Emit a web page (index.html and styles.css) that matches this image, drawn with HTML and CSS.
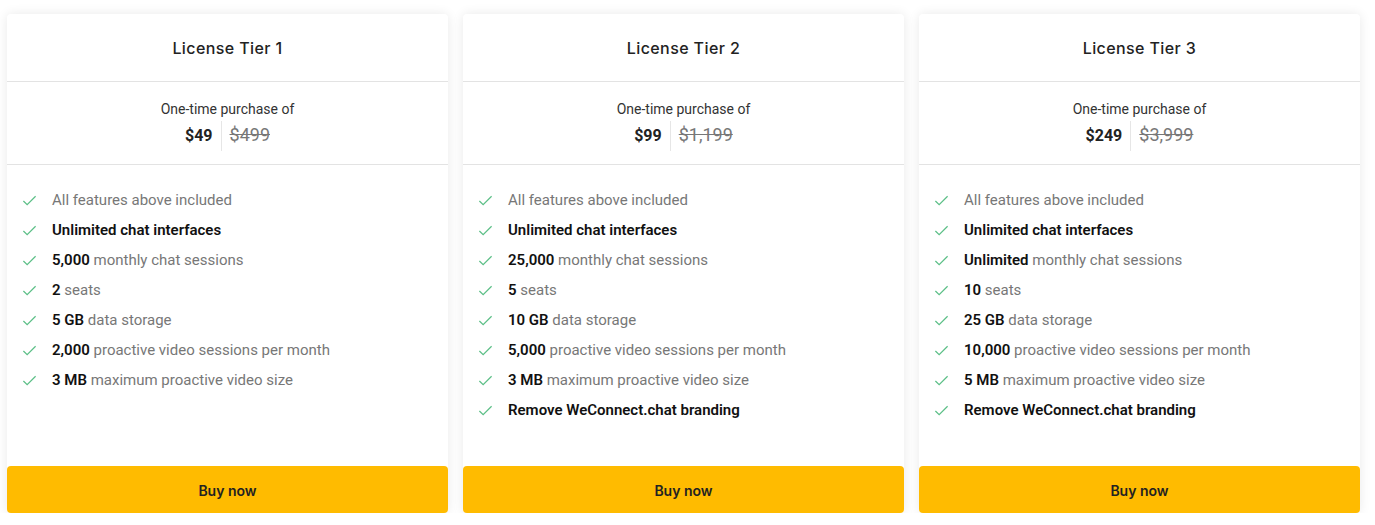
FILE: index.html
```html
<!DOCTYPE html>
<html lang="en">
<head>
<meta charset="utf-8">
<title>Pricing</title>
<link rel="stylesheet" href="styles.css">
</head>
<body>
<div class="plans">
  <div class="card">
    <div class="card-head"><h2 class="title">License Tier 1</h2></div>
    <div class="price-box">
      <div class="price-label">One-time purchase of</div>
      <div class="price-row"><span class="price-now">$49</span><span class="price-old">$499</span></div>
    </div>
    <ul class="features">
      <li><svg class="check" viewBox="0 0 16 16"><path d="M1.5 8.5l4 4 9-9"/></svg><span>All features above included</span></li>
      <li><svg class="check" viewBox="0 0 16 16"><path d="M1.5 8.5l4 4 9-9"/></svg><span><b>Unlimited chat interfaces</b></span></li>
      <li><svg class="check" viewBox="0 0 16 16"><path d="M1.5 8.5l4 4 9-9"/></svg><span><b>5,000</b> monthly chat sessions</span></li>
      <li><svg class="check" viewBox="0 0 16 16"><path d="M1.5 8.5l4 4 9-9"/></svg><span><b>2</b> seats</span></li>
      <li><svg class="check" viewBox="0 0 16 16"><path d="M1.5 8.5l4 4 9-9"/></svg><span><b>5 GB</b> data storage</span></li>
      <li><svg class="check" viewBox="0 0 16 16"><path d="M1.5 8.5l4 4 9-9"/></svg><span><b>2,000</b> proactive video sessions per month</span></li>
      <li><svg class="check" viewBox="0 0 16 16"><path d="M1.5 8.5l4 4 9-9"/></svg><span><b>3 MB</b> maximum proactive video size</span></li>
    </ul>
    <button class="buy">Buy now</button>
  </div>
  <div class="card">
    <div class="card-head"><h2 class="title">License Tier 2</h2></div>
    <div class="price-box">
      <div class="price-label">One-time purchase of</div>
      <div class="price-row"><span class="price-now">$99</span><span class="price-old">$1,199</span></div>
    </div>
    <ul class="features">
      <li><svg class="check" viewBox="0 0 16 16"><path d="M1.5 8.5l4 4 9-9"/></svg><span>All features above included</span></li>
      <li><svg class="check" viewBox="0 0 16 16"><path d="M1.5 8.5l4 4 9-9"/></svg><span><b>Unlimited chat interfaces</b></span></li>
      <li><svg class="check" viewBox="0 0 16 16"><path d="M1.5 8.5l4 4 9-9"/></svg><span><b>25,000</b> monthly chat sessions</span></li>
      <li><svg class="check" viewBox="0 0 16 16"><path d="M1.5 8.5l4 4 9-9"/></svg><span><b>5</b> seats</span></li>
      <li><svg class="check" viewBox="0 0 16 16"><path d="M1.5 8.5l4 4 9-9"/></svg><span><b>10 GB</b> data storage</span></li>
      <li><svg class="check" viewBox="0 0 16 16"><path d="M1.5 8.5l4 4 9-9"/></svg><span><b>5,000</b> proactive video sessions per month</span></li>
      <li><svg class="check" viewBox="0 0 16 16"><path d="M1.5 8.5l4 4 9-9"/></svg><span><b>3 MB</b> maximum proactive video size</span></li>
      <li><svg class="check" viewBox="0 0 16 16"><path d="M1.5 8.5l4 4 9-9"/></svg><span><b>Remove WeConnect.chat branding</b></span></li>
    </ul>
    <button class="buy">Buy now</button>
  </div>
  <div class="card">
    <div class="card-head"><h2 class="title">License Tier 3</h2></div>
    <div class="price-box">
      <div class="price-label">One-time purchase of</div>
      <div class="price-row"><span class="price-now">$249</span><span class="price-old">$3,999</span></div>
    </div>
    <ul class="features">
      <li><svg class="check" viewBox="0 0 16 16"><path d="M1.5 8.5l4 4 9-9"/></svg><span>All features above included</span></li>
      <li><svg class="check" viewBox="0 0 16 16"><path d="M1.5 8.5l4 4 9-9"/></svg><span><b>Unlimited chat interfaces</b></span></li>
      <li><svg class="check" viewBox="0 0 16 16"><path d="M1.5 8.5l4 4 9-9"/></svg><span><b>Unlimited</b> monthly chat sessions</span></li>
      <li><svg class="check" viewBox="0 0 16 16"><path d="M1.5 8.5l4 4 9-9"/></svg><span><b>10</b> seats</span></li>
      <li><svg class="check" viewBox="0 0 16 16"><path d="M1.5 8.5l4 4 9-9"/></svg><span><b>25 GB</b> data storage</span></li>
      <li><svg class="check" viewBox="0 0 16 16"><path d="M1.5 8.5l4 4 9-9"/></svg><span><b>10,000</b> proactive video sessions per month</span></li>
      <li><svg class="check" viewBox="0 0 16 16"><path d="M1.5 8.5l4 4 9-9"/></svg><span><b>5 MB</b> maximum proactive video size</span></li>
      <li><svg class="check" viewBox="0 0 16 16"><path d="M1.5 8.5l4 4 9-9"/></svg><span><b>Remove WeConnect.chat branding</b></span></li>
    </ul>
    <button class="buy">Buy now</button>
  </div>
</div>
</body>
</html>
```
FILE: styles.css
```css
* { box-sizing: border-box; }
html, body { margin: 0; padding: 0; background: #fff; }
body {
  font-family: Roboto, "Liberation Sans", Arial, sans-serif;
  color: #222;
}
.plans {
  display: grid;
  grid-template-columns: repeat(3, 441px);
  gap: 15px;
  padding: 14px 0 0 7px;
}
.card {
  height: 499px;
  background: #fff;
  border-radius: 4px;
  box-shadow: 0 0 12px rgba(0, 0, 0, 0.09);
  display: flex;
  flex-direction: column;
}
.card-head {
  height: 68px;
  border-bottom: 1px solid #e3e3e3;
  display: flex;
  align-items: center;
  justify-content: center;
  padding-top: 1px;
}
.title {
  margin: 0;
  font-family: Inter, Roboto, sans-serif;
  font-size: 16px;
  font-weight: 500;
  letter-spacing: 0.4px;
  color: #222;
}
.price-box {
  height: 83px;
  border-bottom: 1px solid #e3e3e3;
  display: flex;
  flex-direction: column;
  align-items: center;
  padding-top: 18px;
}
.price-label {
  font-size: 14px;
  color: #333;
  line-height: 18px;
}
.price-row {
  display: flex;
  align-items: baseline;
  margin-top: 3px;
}
.price-now {
  font-size: 16px;
  font-weight: 700;
  color: #222;
  padding: 6px 8px 6px 0;
  border-right: 1px solid #e6e6e6;
  line-height: 18px;
}
.price-old {
  font-size: 18px;
  color: #777;
  text-decoration: line-through;
  padding-left: 8px;
  line-height: 20px;
}
.features {
  list-style: none;
  margin: 0;
  padding: 20px 0 0 15px;
}
.features li {
  display: flex;
  align-items: center;
  height: 30px;
  font-size: 15px;
  color: #777;
}
.features b { color: #111; font-weight: 600; }
.check {
  width: 15px;
  height: 15px;
  margin-right: 15px;
  fill: none;
  stroke: #5cbf87;
  stroke-width: 1.3;
}
.buy {
  margin-top: auto;
  height: 47px;
  border: 0;
  border-radius: 4px;
  background: #ffbb00;
  font-family: Inter, Roboto, sans-serif;
  font-size: 14px;
  font-weight: 600;
  color: #222;
  cursor: pointer;
  padding-top: 2px;
}
```
